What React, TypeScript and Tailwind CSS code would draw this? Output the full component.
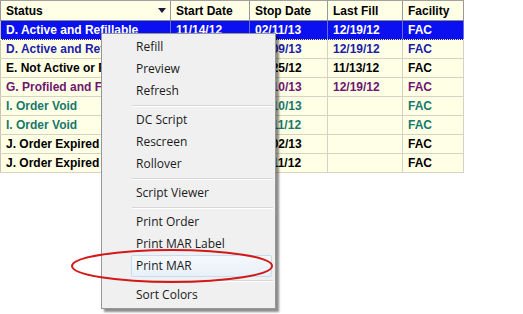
import React from "react";

// Grid columns: widths include the 1px right border
const columns = [
  { key: "status", label: "Status", width: "w-[171px]" },
  { key: "start", label: "Start Date", width: "w-[79px]" },
  { key: "stop", label: "Stop Date", width: "w-[78px]" },
  { key: "last", label: "Last Fill", width: "w-[75px]" },
  { key: "facility", label: "Facility", width: "w-[61px]" },
];

interface OrderRow {
  status: string;
  start: string;
  stop: string;
  last: string;
  facility: string;
  color: string;
}

const rows: OrderRow[] = [
  { status: "D. Active and Refillable", start: "11/14/12", stop: "02/11/13", last: "12/19/12", facility: "FAC", color: "text-white" },
  { status: "D. Active and Refillable", start: "11/12/12", stop: "01/09/13", last: "12/19/12", facility: "FAC", color: "text-[#1c1ca8]" },
  { status: "E. Not Active or Refillable", start: "10/26/12", stop: "12/25/12", last: "11/13/12", facility: "FAC", color: "text-black" },
  { status: "G. Profiled and Filled", start: "11/12/12", stop: "01/10/13", last: "12/19/12", facility: "FAC", color: "text-[#6e1670]" },
  { status: "I. Order Void", start: "11/12/12", stop: "01/10/13", last: "", facility: "FAC", color: "text-[#17786c]" },
  { status: "I. Order Void", start: "10/12/12", stop: "12/11/12", last: "", facility: "FAC", color: "text-[#17786c]" },
  { status: "J. Order Expired", start: "11/02/12", stop: "01/02/13", last: "", facility: "FAC", color: "text-black" },
  { status: "J. Order Expired", start: "10/12/12", stop: "12/11/12", last: "", facility: "FAC", color: "text-black" },
];

type MenuEntry = { label: string; hover?: boolean } | "sep";

const menu: MenuEntry[] = [
  { label: "Refill" },
  { label: "Preview" },
  { label: "Refresh" },
  "sep",
  { label: "DC Script" },
  { label: "Rescreen" },
  { label: "Rollover" },
  "sep",
  { label: "Script Viewer" },
  "sep",
  { label: "Print Order" },
  { label: "Print MAR Label" },
  { label: "Print MAR", hover: true },
  "sep",
  { label: "Sort Colors" },
];

const ContextMenu = () => (
  <div className="absolute left-[101px] top-[33px] w-[175px] border border-[#979797] bg-[#f0f0f0] p-[2px] shadow-[3px_3px_2px_rgba(0,0,0,0.45)] font-['Open_Sans',sans-serif] text-[12px] font-normal text-[#1a1a1a]">
    {menu.map((entry, i) =>
      entry === "sep" ? (
        <div key={i} className="flex h-[7px] items-center pl-[28px]">
          <div className="h-px w-full bg-[#d7d7d7] shadow-[0_1px_0_#ffffff]" />
        </div>
      ) : entry.hover ? (
        <div
          key={i}
          className="ml-[27px] mr-[1px] flex h-[22px] items-center rounded-[2px] border border-[#c6dcef] bg-gradient-to-b from-[#f4f8fc] to-[#e8f0f9] pl-[4px]"
        >
          {entry.label}
        </div>
      ) : (
        <div key={i} className="flex h-[22px] items-center pl-[32px]">
          {entry.label}
        </div>
      )
    )}
  </div>
);

export default function App() {
  return (
    <div className="relative h-[314px] w-[523px] overflow-hidden bg-white font-['Liberation_Sans',Arial,sans-serif] text-[12px] font-bold">
      <div className="w-[464px] border-t border-[#a0a0a0]">
        {/* header */}
        <div className="flex h-[20px] border-b border-[#8a8a8a] bg-[#ffffe6] text-black">
          {columns.map((c, i) => (
            <div
              key={c.key}
              className={`${c.width} flex items-center justify-between border-r border-[#9a9a9a] pl-[5px] pr-[3px] ${i === 0 ? "border-l border-l-[#9a9a9a]" : ""}`}
            >
              <span>{c.label}</span>
              {i === 0 && (
                <svg width="8" height="5" viewBox="0 0 8 5" className="mr-[1px]">
                  <path d="M0 0h8L4 5z" fill="#1a1a40" />
                </svg>
              )}
            </div>
          ))}
        </div>

        {/* rows */}
        {rows.map((r, ri) => {
          const selected = ri === 0;
          return (
            <div
              key={ri}
              className={`flex h-[19px] border-b ${
                selected
                  ? "border-dotted border-[#ffff99] bg-[#0a10f0]"
                  : "border-[#d6d3c4] bg-[#ffffe6]"
              } ${r.color}`}
            >
              {columns.map((c, ci) => (
                <div
                  key={c.key}
                  className={`${c.width} flex items-center overflow-hidden whitespace-nowrap border-r pl-[5px] ${
                    selected ? "border-[#6a6ae8]" : "border-[#d6d3c4]"
                  } ${ci === 0 ? "border-l border-l-[#c8c5b6]" : ""}`}
                >
                  {r[c.key as keyof OrderRow]}
                </div>
              ))}
            </div>
          );
        })}
      </div>

      <ContextMenu />

      {/* red ellipse drawn over "Print MAR" */}
      <svg className="absolute left-0 top-0" width="523" height="314">
        <ellipse cx="172" cy="266" rx="100" ry="16" fill="none" stroke="#d41818" strokeWidth="2" />
      </svg>
    </div>
  );
}
